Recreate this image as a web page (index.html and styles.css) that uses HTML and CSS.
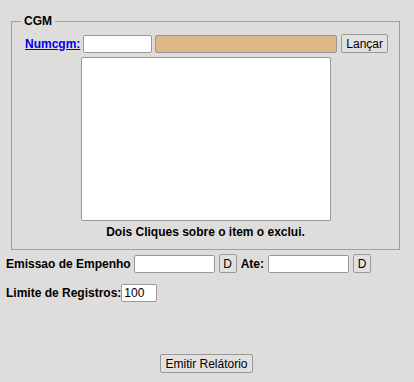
FILE: index.html
```html
<!DOCTYPE html>
<html lang="pt-BR">
<head>
    <meta charset="UTF-8">
    <title>Relatório de Empenhos por CGM</title>
    <link rel="stylesheet" href="styles.css">
</head>
<body>
    <div class="page">
        <fieldset class="cgm">
            <legend>CGM</legend>
            <div class="cgm-row">
                <a href="#" class="lnk">Numcgm:</a>
                <input type="text" class="txt num">
                <input type="text" class="txt nome" readonly>
                <button type="button" class="btn">Lançar</button>
            </div>
            <div class="lista"></div>
            <p class="hint">Dois Cliques sobre o item o exclui.</p>
        </fieldset>

        <div class="row row-emissao">
            <label class="lbl">Emissao de Empenho</label>
            <input type="text" class="txt data">
            <button type="button" class="btn btn-d">D</button>
            <label class="lbl lbl-ate">Ate:</label>
            <input type="text" class="txt data">
            <button type="button" class="btn btn-d">D</button>
        </div>

        <div class="row row-limite">
            <label class="lbl">Limite de Registros:</label>
            <input type="text" class="txt limite" value="100">
        </div>

        <div class="acoes">
            <button type="button" class="btn">Emitir Relátorio</button>
        </div>
    </div>
</body>
</html>
```

FILE: styles.css
```css
body {
    margin: 0;
    background-color: #dfdddb;
    font-family: "Liberation Sans", Arial, sans-serif;
    font-size: 12px;
    color: #000;
}
.page {
    width: 409px;
    padding-top: 14px;
}
.cgm {
    margin: 0 0 0 11px;
    width: 389px;
    height: 236px;
    box-sizing: border-box;
    border: 1px solid #a0a0a0;
    padding: 6px 0 0 0;
}
.cgm legend {
    margin-left: 9px;
    padding: 0 3px;
    font-weight: bold;
}
.cgm-row {
    display: flex;
    align-items: center;
    padding-left: 13px;
}
.lnk {
    color: #0000ee;
    font-weight: bold;
    margin-right: 3px;
}
.txt {
    height: 18px;
    box-sizing: border-box;
    border: 1px solid #999;
    border-radius: 2px;
    background: #fff;
    font-family: "Liberation Sans", Arial, sans-serif;
    font-size: 12px;
    padding: 0 2px;
    margin: 0;
}
.num {
    width: 69px;
}
.nome {
    width: 182px;
    margin-left: 3px;
    background: #deb887;
}
.btn {
    height: 19px;
    box-sizing: border-box;
    border: 1px solid #999;
    border-radius: 2px;
    background: #e3e1df;
    font-family: "Liberation Sans", Arial, sans-serif;
    font-size: 12px;
    padding: 0 4px;
    margin: 0 0 0 4px;
    color: #000;
}
.lista {
    width: 250px;
    height: 164px;
    box-sizing: border-box;
    border: 1px solid #999;
    border-radius: 2px;
    background: #fff;
    margin: 4px 0 0 69px;
}
.hint {
    margin: 4px 0 0;
    text-align: center;
    font-weight: bold;
}
.row {
    display: flex;
    align-items: center;
    padding-left: 6px;
}
.row-emissao {
    margin-top: 4px;
}
.row-limite {
    margin-top: 11px;
}
.lbl {
    font-weight: bold;
    margin-right: 3px;
}
.lbl-ate {
    margin-right: 4px;
}
.data {
    width: 81px;
}
.btn-d {
    margin: 0 4px;
    width: 18px;
    padding: 0;
}
.limite {
    width: 36px;
    margin-left: -3px;
}
.acoes {
    text-align: center;
    margin-top: 52px;
}
```
